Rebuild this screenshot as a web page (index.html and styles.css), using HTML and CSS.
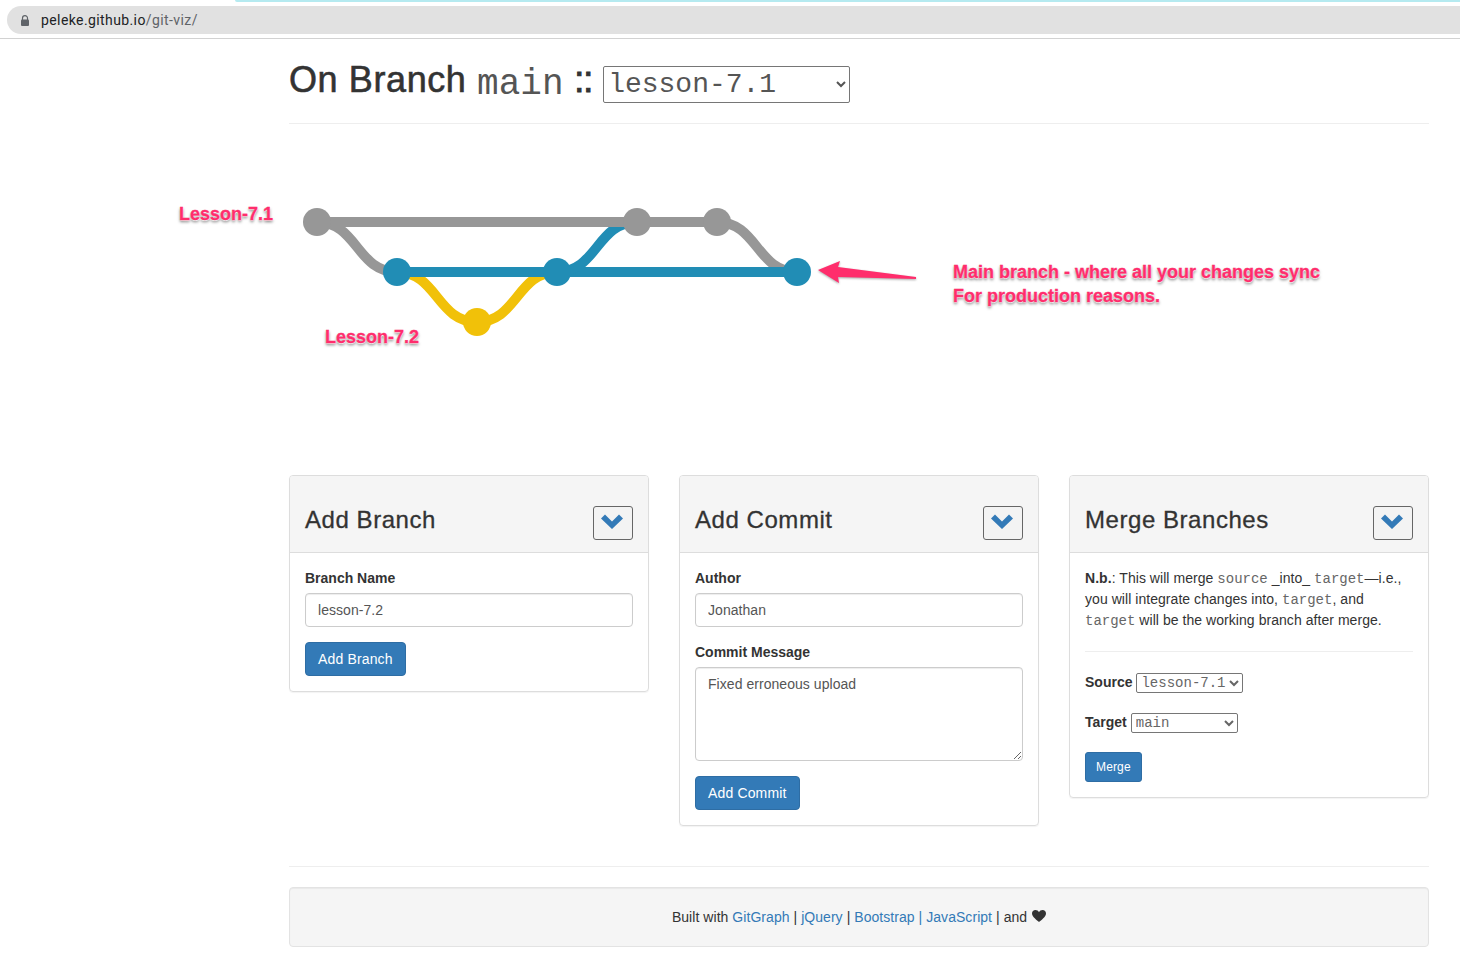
FILE: index.html
```html
<!doctype html>
<html>
<head>
	<meta charset="utf-8" />
	<title>Git Viz</title>
	<link rel="stylesheet" href="styles.css">
</head>
<body>
	<div class="chrome">
		<div class="loading"></div>
		<div class="address">
			<svg class="lock" width="8" height="11" viewBox="0 0 8 11"><path d="M1.5 5V3.2a2.5 2.5 0 0 1 5 0V5" fill="none" stroke="#5f6368" stroke-width="1.2"/><rect x="0" y="4.6" width="8" height="6.4" rx="1" fill="#5f6368"/></svg>
			<span class="host">peleke.github.io</span><span class="path">/git-viz/</span>
		</div>
	</div>

	<div class="container">
		<div class="page-header">
			<h1>On Branch <code>main</code> <span class="sep">::</span></h1>
			<select class="branch-select"><option>lesson-7.1</option><option>lesson-7.2</option><option>main</option></select>
		</div>

		<div class="graph">
			<svg class="graph-svg" width="1140" height="351" viewBox="289 124 1140 351">
				<g fill="none" stroke-width="10">
					<path d="M317 222H717" stroke="#979797"/>
					<path d="M317 222C357 222 357 272 397 272" stroke="#979797"/>
					<path d="M717 222C757 222 757 272 797 272" stroke="#979797"/>
					<path d="M397 272C437 272 437 322 477 322C517 322 517 272 557 272" stroke="#f1c109"/>
					<path d="M397 272H797" stroke="#218db5"/>
					<path d="M557 272C597 272 597 222 637 222" stroke="#218db5"/>
					<path d="M317 222H717" stroke="#979797"/>
				</g>
				<circle cx="317" cy="222" r="14" fill="#979797"/>
				<circle cx="637" cy="222" r="14" fill="#979797"/>
				<circle cx="717" cy="222" r="14" fill="#979797"/>
				<circle cx="397" cy="272" r="14" fill="#218db5"/>
				<circle cx="557" cy="272" r="14" fill="#218db5"/>
				<circle cx="797" cy="272" r="14" fill="#218db5"/>
				<circle cx="477" cy="322" r="14" fill="#f1c109"/>
				<path class="arrow" d="M818 270L840 261L838 267L916 277L916 279L838 277L839 283Z" fill="#ff2d6c"/>
			</svg>
			<div class="note note-71">Lesson-7.1</div>
			<div class="note note-72">Lesson-7.2</div>
			<div class="note note-main">Main branch - where all your changes sync<br>For production reasons.</div>
		</div>

		<div class="panels">
			<div class="panel">
				<div class="panel-heading">
					<h3>Add Branch</h3>
					<button class="toggle"><svg width="22" height="15" viewBox="0 0 22 15"><path d="M0 4.5L4 0.5L11 7.500L18 0.500L22 4.500L11 15Z" fill="#337ab7"/></svg></button>
				</div>
				<div class="panel-body">
					<div class="form-group">
						<label>Branch Name</label>
						<input class="form-control" type="text" value="lesson-7.2">
					</div>
					<button class="btn">Add Branch</button>
				</div>
			</div>

			<div class="panel">
				<div class="panel-heading">
					<h3>Add Commit</h3>
					<button class="toggle"><svg width="22" height="15" viewBox="0 0 22 15"><path d="M0 4.5L4 0.5L11 7.500L18 0.500L22 4.500L11 15Z" fill="#337ab7"/></svg></button>
				</div>
				<div class="panel-body">
					<div class="form-group">
						<label>Author</label>
						<input class="form-control" type="text" value="Jonathan">
					</div>
					<div class="form-group">
						<label>Commit Message</label>
						<textarea class="form-control message">Fixed erroneous upload</textarea>
					</div>
					<button class="btn">Add Commit</button>
				</div>
			</div>

			<div class="panel">
				<div class="panel-heading">
					<h3>Merge Branches</h3>
					<button class="toggle"><svg width="22" height="15" viewBox="0 0 22 15"><path d="M0 4.5L4 0.5L11 7.500L18 0.500L22 4.500L11 15Z" fill="#337ab7"/></svg></button>
				</div>
				<div class="panel-body">
					<p class="merge-note"><b>N.b.</b>: This will merge <code>source</code> _into_ <code>target</code>—i.e., you will integrate changes into, <code>target</code>, and <code>target</code> will be the working branch after merge.</p>
					<hr class="merge-rule">
					<div class="form-group inline">
						<label>Source</label>
						<select class="small-select"><option>lesson-7.1</option></select>
					</div>
					<div class="form-group inline">
						<label>Target</label>
						<select class="small-select"><option>main</option></select>
					</div>
					<button class="btn btn-sm">Merge</button>
				</div>
			</div>
		</div>

		<hr class="foot-rule">
		<div class="well">
			Built with <a>GitGraph</a> | <a>jQuery</a> | <a>Bootstrap | JavaScript</a> | and
			<svg class="heart" width="14" height="12" viewBox="0 0 14 12"><path d="M7 12C5 10 0 6.8 0 3.4C0 1.4 1.5 0 3.4 0C5 0 6.300 .9 7 2.200C7.700 .9 9 0 10.600 0C12.500 0 14 1.400 14 3.400C14 6.800 9 10 7 12Z" fill="#333"/></svg>
		</div>
	</div>
</body>
</html>
```

FILE: styles.css
```css
*
{
	box-sizing: border-box;
}

body
{
	margin: 0;
	height: 964px;
	overflow: hidden;
	background: #fff;
	color: #333;
	font-family: "Liberation Sans", Arial, sans-serif;
	font-size: 14px;
	line-height: 20px;
	letter-spacing: 0.05px;
}

code
{
	font-family: "Liberation Mono", monospace;
	font-weight: normal;
	letter-spacing: 0;
}

/* browser bar */
.chrome
{
	position: relative;
	height: 39px;
	padding: 6px 0 0 7px;
	border-bottom: 1px solid #d2d2d2;
}

.loading
{
	position: absolute;
	top: 0;
	left: 235px;
	right: 0;
	height: 2px;
	background: #b5eaf0;
	border-bottom-left-radius: 3px;
}

.address
{
	display: flex;
	align-items: center;
	height: 28px;
	padding-left: 14px;
	border-radius: 14px 0 0 14px;
	background: #e1e1e1;
	font-family: Roboto, sans-serif;
	font-size: 14px;
	letter-spacing: 0.4px;
}

.lock
{
	margin-right: 12px;
}

.host
{
	color: #202124;
}

.path
{
	color: #5f6368;
}

/* page */
.container
{
	margin: 0 31px 0 289px;
}

.page-header
{
	display: flex;
	align-items: flex-start;
	height: 85px;
	padding-top: 21px;
	border-bottom: 1px solid #eee;
}

h1
{
	margin: 0;
	font-size: 36px;
	line-height: 40px;
	font-weight: 500;
	letter-spacing: 0.6px;
	-webkit-text-stroke: 0.6px #333;
	white-space: pre;
}

h1 code
{
	position: relative;
	top: 2px;
	color: #555;
	font-size: 36px;
	-webkit-text-stroke: 0;
}

.sep
{
	letter-spacing: -1px;
	-webkit-text-stroke: 1px #333;
}

.branch-select
{
	width: 247px;
	height: 37px;
	margin: 6px 0 0 11px;
	padding: 0;
	border: 1px solid #767676;
	border-radius: 2px;
	background: #fff;
	color: #555;
	font-family: "Liberation Mono", monospace;
	font-size: 28px;
}

/* graph */
.graph
{
	position: relative;
	height: 351px;
}

.graph-svg
{
	display: block;
	overflow: visible;
}

.arrow
{
	filter: drop-shadow(0 1px 1px rgba(0, 0, 0, 0.35));
}

.note
{
	position: absolute;
	color: #ff2d6c;
	font-size: 18px;
	line-height: 24px;
	font-weight: bold;
	letter-spacing: 0;
	white-space: nowrap;
	-webkit-text-stroke: 0.3px #ff2d6c;
	text-shadow: 0 0 1px #fff, 0 1px 1px rgba(255, 255, 255, 0.8), 0 2px 3px rgba(0, 0, 0, 0.55);
}

.note-71
{
	left: -110px;
	top: 78px;
}

.note-72
{
	left: 36px;
	top: 201px;
}

.note-main
{
	left: 664px;
	top: 136px;
}

/* panels */
.panels
{
	display: flex;
	align-items: flex-start;
	gap: 30px;
}

.panel
{
	width: 360px;
	border: 1px solid #ddd;
	border-radius: 4px;
	box-shadow: 0 1px 1px rgba(0, 0, 0, 0.05);
}

.panel-heading
{
	display: flex;
	justify-content: space-between;
	height: 77px;
	padding: 10px 15px;
	border-bottom: 1px solid #ddd;
	background: #f5f5f5;
	border-radius: 3px 3px 0 0;
}

h3
{
	margin: 21px 0 9px;
	font-size: 24px;
	line-height: 26px;
	font-weight: 500;
	letter-spacing: 0.55px;
	-webkit-text-stroke: 0.3px #333;
}

.toggle
{
	display: flex;
	align-items: center;
	justify-content: center;
	width: 40px;
	height: 34px;
	margin-top: 20px;
	padding: 0 2px 4px 0;
	border: 1px solid #666;
	border-radius: 3px;
	background: #f3f3f3;
}

.panel-body
{
	padding: 15px;
}

.form-group
{
	margin-bottom: 15px;
}

label
{
	display: inline-block;
	margin-bottom: 5px;
	font-weight: bold;
	letter-spacing: 0;
}

.form-control
{
	display: block;
	width: 100%;
	height: 34px;
	padding: 6px 12px;
	border: 1px solid #ccc;
	border-radius: 4px;
	box-shadow: inset 0 1px 1px rgba(0, 0, 0, 0.075);
	color: #555;
	font-family: inherit;
	font-size: 14px;
	line-height: 20px;
	letter-spacing: 0.05px;
}

.message
{
	height: 94px;
}

.btn
{
	display: block;
	height: 34px;
	padding: 6px 12px;
	border: 1px solid #2e6da4;
	border-radius: 4px;
	background: #337ab7;
	color: #fff;
	font-family: inherit;
	font-size: 14px;
	line-height: 20px;
	letter-spacing: 0.15px;
}

.btn-sm
{
	height: 30px;
	padding: 5px 10px;
	border-radius: 3px;
	font-size: 12px;
	line-height: 18px;
}

.merge-note
{
	margin: 0;
	line-height: 21px;
}

.merge-note code
{
	color: #666;
	font-size: 14px;
	line-height: 1;
}

.merge-rule
{
	margin: 20px 0;
	border: 0;
	border-top: 1px solid #eee;
}

.inline
{
	display: flex;
	align-items: flex-start;
	gap: 4px;
	height: 25px;
}

.small-select
{
	width: 107px;
	height: 20px;
	margin-top: 1px;
	padding: 0;
	border: 1px solid #767676;
	border-radius: 2px;
	background: #fff;
	color: #666;
	font-family: "Liberation Mono", monospace;
	font-size: 14px;
}

/* footer */
.foot-rule
{
	margin: 40px 0 20px;
	border: 0;
	border-top: 1px solid #eee;
}

.well
{
	height: 60px;
	padding: 19px;
	border: 1px solid #e3e3e3;
	border-radius: 4px;
	background: #f5f5f5;
	box-shadow: inset 0 1px 1px rgba(0, 0, 0, 0.05);
	text-align: center;
}

.well a
{
	color: #337ab7;
}

.heart
{
	margin-left: 1px;
}
```
